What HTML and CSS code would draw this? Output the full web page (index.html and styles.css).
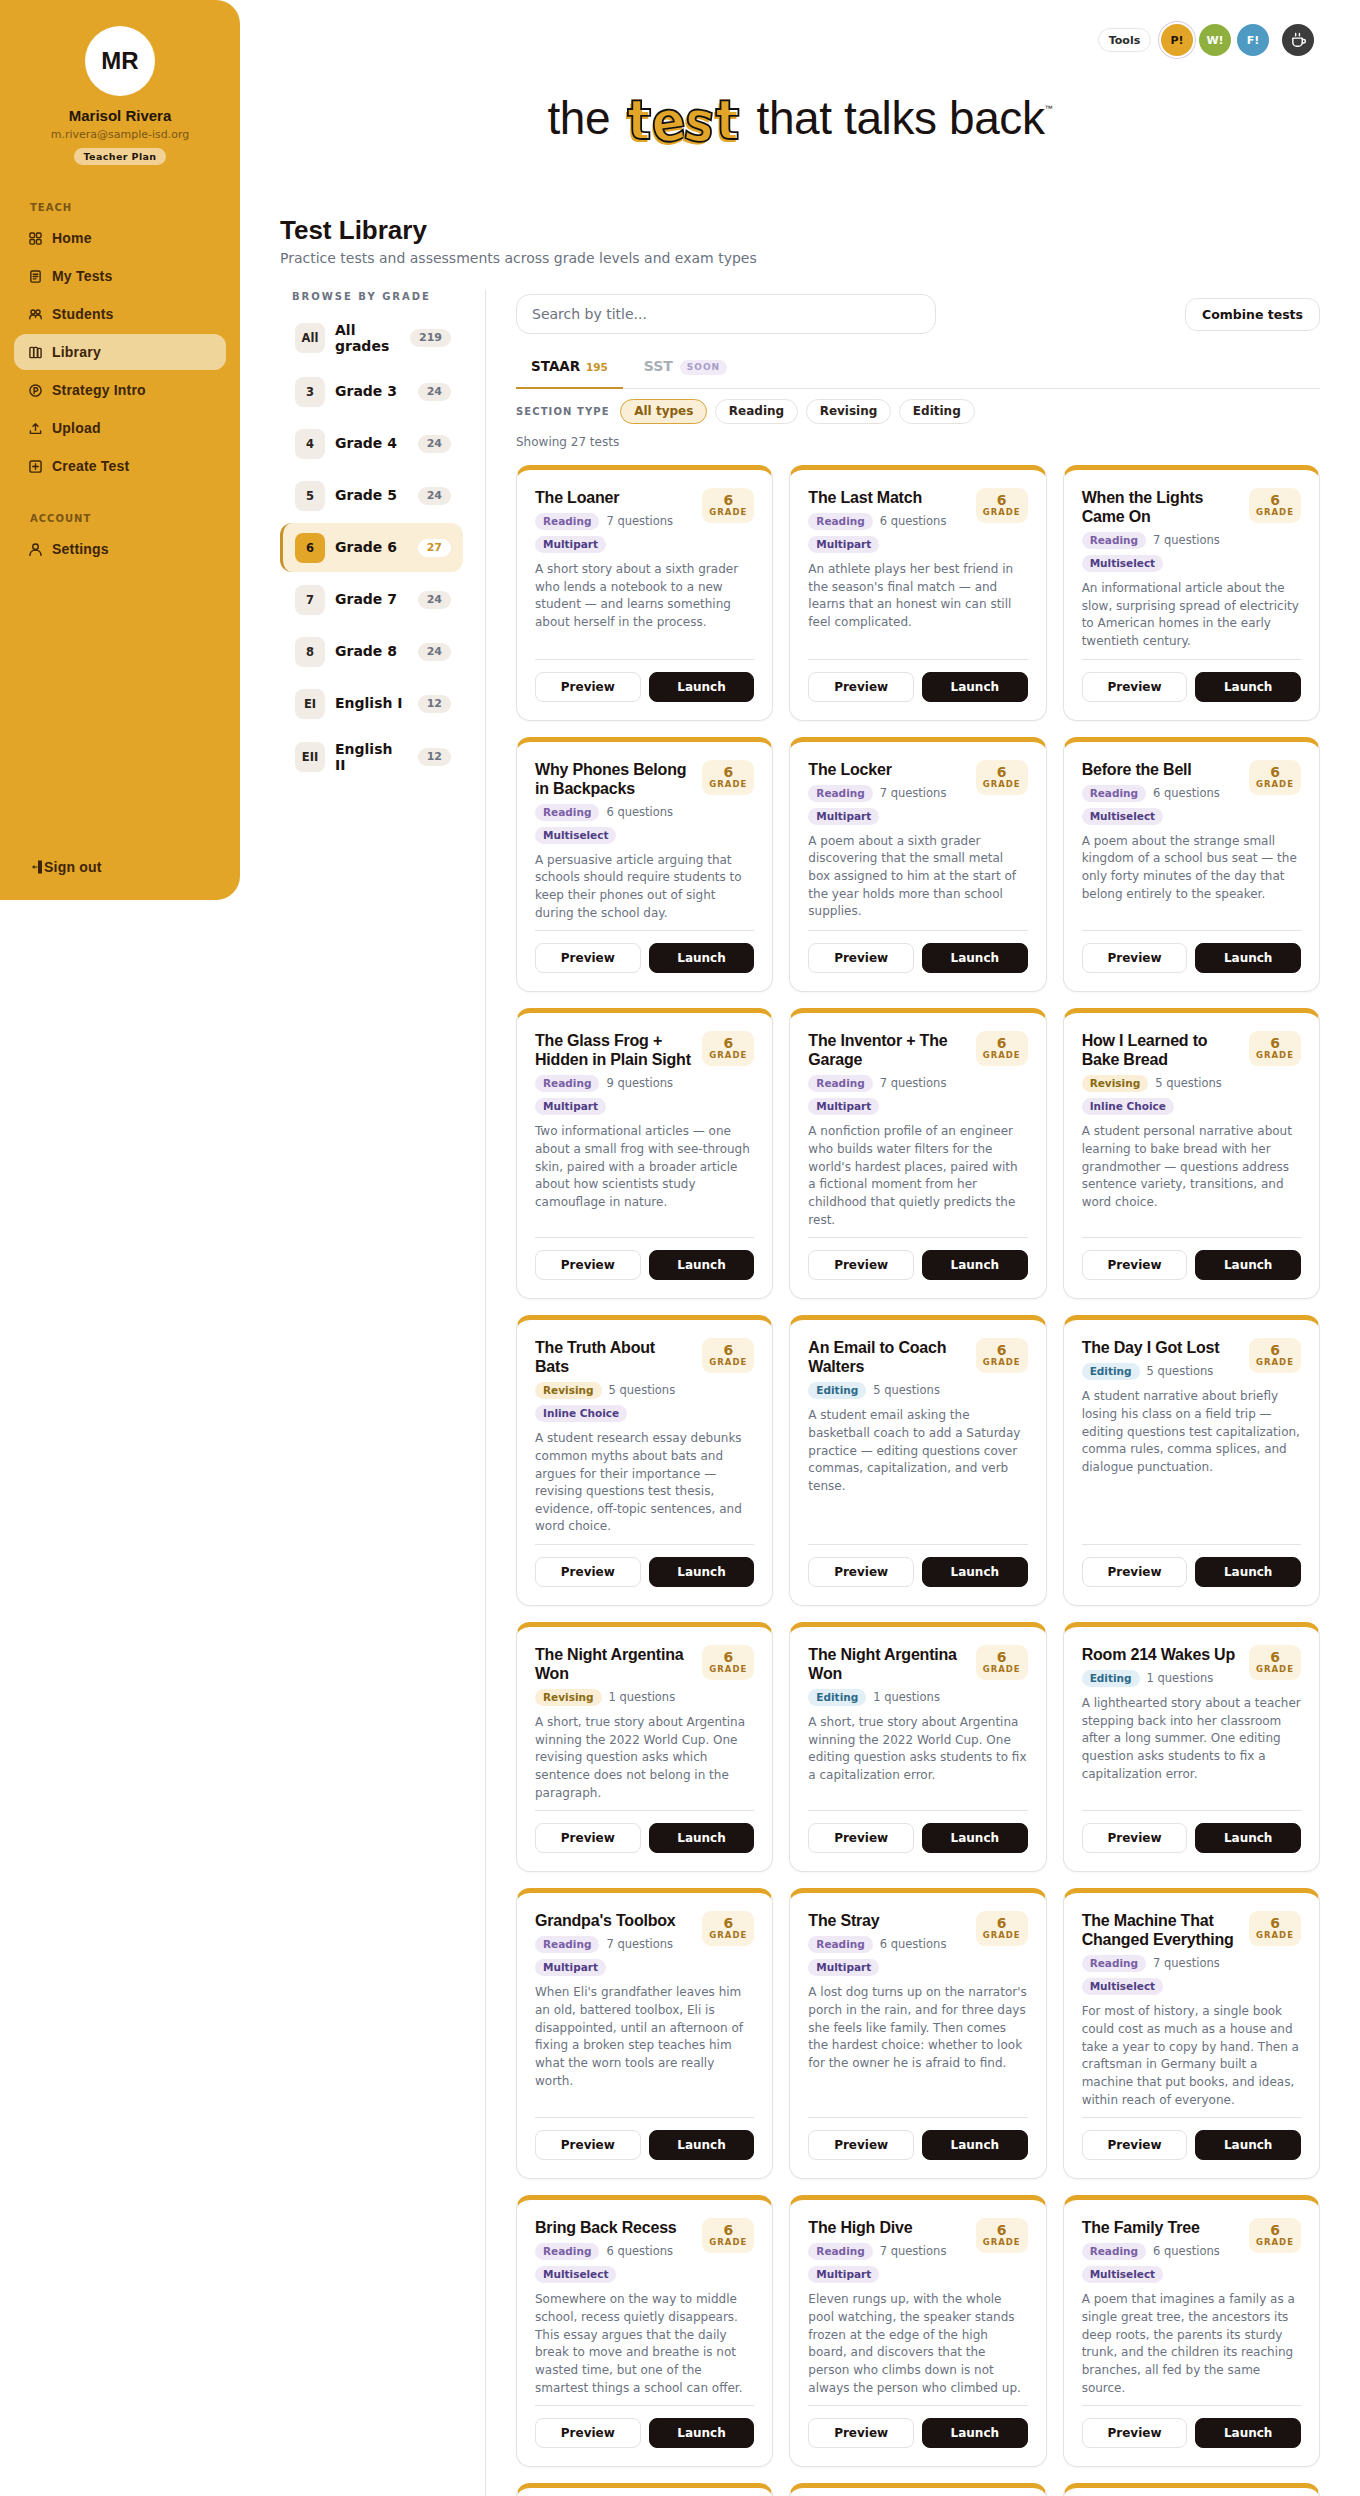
FILE: index.html
```html
<!DOCTYPE html>
<html lang="en">
<head>
<meta charset="utf-8">
<title>Test Library</title>
<link rel="stylesheet" href="styles.css">
</head>
<body>
<div class="app">
  <aside class="sidebar">
    <div class="profile">
      <div class="avatar">MR</div>
      <div class="user-name">Marisol Rivera</div>
      <div class="user-email">m.rivera@sample-isd.org</div>
      <div class="plan">Teacher Plan</div>
    </div>
    <div class="nav-label">TEACH</div>
    <nav class="nav">
      <a class="nav-item"><svg class="nav-icon" viewBox="0 0 14 14"><rect x="1" y="1" width="5" height="5" rx="1.3"/><rect x="8" y="1" width="5" height="5" rx="1.3"/><rect x="1" y="8" width="5" height="5" rx="1.3"/><rect x="8" y="8" width="5" height="5" rx="1.3"/></svg>Home</a>
      <a class="nav-item"><svg class="nav-icon" viewBox="0 0 14 14"><rect x="2" y="1" width="10" height="12" rx="1.5"/><path d="M4.5 4.5h5M4.5 7h5M4.5 9.5h3"/></svg>My Tests</a>
      <a class="nav-item"><svg class="nav-icon" viewBox="0 0 14 14"><circle cx="4.3" cy="4.3" r="2.2"/><circle cx="9.7" cy="4.3" r="2.2"/><path d="M.8 11.5c0-2.6 1.5-4 3.5-4s3 1 2.7 2.5c-.3-1.500.7-2.500 2.700-2.500s3.500 1.400 3.500 4"/></svg>Students</a>
      <a class="nav-item active"><svg class="nav-icon" viewBox="0 0 14 14"><rect x="1" y="1.500" width="4" height="11" rx="1"/><rect x="5" y="1.500" width="4" height="11" rx="1"/><rect x="9.500" y="2.500" width="3.500" height="10" rx="1"/></svg>Library</a>
      <a class="nav-item"><svg class="nav-icon" viewBox="0 0 14 14"><circle cx="7" cy="7" r="6"/><path d="M5.500 10.200V4h2a1.900 1.900 0 0 1 0 3.800h-2"/></svg>Strategy Intro</a>
      <a class="nav-item"><svg class="nav-icon" viewBox="0 0 14 14"><path d="M7 9V2M4.300 4.500 7 1.800l2.700 2.700M1.500 9.500v2.800h11V9.500"/></svg>Upload</a>
      <a class="nav-item"><svg class="nav-icon" viewBox="0 0 14 14"><rect x="1" y="1" width="12" height="12" rx="2"/><path d="M7 4v6M4 7h6"/></svg>Create Test</a>
    </nav>
    <div class="nav-label account">ACCOUNT</div>
    <nav class="nav">
      <a class="nav-item"><svg class="nav-icon" viewBox="0 0 14 14"><circle cx="7" cy="4" r="3"/><path d="M1 13.500c0-3.500 2.500-6 6-6s6 2.500 6 6"/></svg>Settings</a>
    </nav>
    <a class="signout"><svg class="signout-icon" viewBox="0 0 10 14"><path class="signout-bar" d="M6 .5h4v13H6z"/><path class="signout-arrow" d="M2.500 5v4L0 7zM2.500 6.400h3v1.200h-3z"/></svg>Sign out</a>
  </aside>

  <main class="main">
    <div class="topbar">
      <button class="tools-btn">Tools</button>
      <div class="circles">
        <span class="circle c-p">P!</span>
        <span class="circle c-w">W!</span>
        <span class="circle c-f">F!</span>
      </div>
      <span class="circle c-coffee"><svg class="coffee" viewBox="0 0 18 18"><path d="M6 1.500v2.500M10 1.500v2.500"/><path d="M3 6.500h10v4.500a4 4 0 0 1-4 4H7a4 4 0 0 1-4-4z"/><path d="M13 8h1.500a1.800 1.800 0 0 1 0 3.600H13"/></svg></span>
    </div>

    <div class="hero">
      <span>the</span>
      <span class="logo"><span class="lt l1">t</span><span class="lt l2">e</span><span class="lt l3">s</span><span class="lt l4">t</span></span>
      <span>that talks back<sup class="tm">™</sup></span>
    </div>

    <h1 class="page-title">Test Library</h1>
    <p class="page-sub">Practice tests and assessments across grade levels and exam types</p>

    <div class="library">
      <aside class="grades">
        <div class="grades-label">BROWSE BY GRADE</div>
        <ul class="grade-list">
          <li class="grade"><span class="grade-key">All</span><span class="grade-name">All grades</span><span class="grade-count">219</span></li>
          <li class="grade"><span class="grade-key">3</span><span class="grade-name">Grade 3</span><span class="grade-count">24</span></li>
          <li class="grade"><span class="grade-key">4</span><span class="grade-name">Grade 4</span><span class="grade-count">24</span></li>
          <li class="grade"><span class="grade-key">5</span><span class="grade-name">Grade 5</span><span class="grade-count">24</span></li>
          <li class="grade active"><span class="grade-key">6</span><span class="grade-name">Grade 6</span><span class="grade-count">27</span></li>
          <li class="grade"><span class="grade-key">7</span><span class="grade-name">Grade 7</span><span class="grade-count">24</span></li>
          <li class="grade"><span class="grade-key">8</span><span class="grade-name">Grade 8</span><span class="grade-count">24</span></li>
          <li class="grade"><span class="grade-key">EI</span><span class="grade-name">English I</span><span class="grade-count">12</span></li>
          <li class="grade"><span class="grade-key">EII</span><span class="grade-name">English II</span><span class="grade-count">12</span></li>
        </ul>
      </aside>

      <section class="content">
        <div class="search-row">
          <div class="search">Search by title...</div>
          <button class="combine">Combine tests</button>
        </div>
        <div class="tabs">
          <div class="tab active">STAAR <span class="tab-count">195</span></div>
          <div class="tab muted">SST <span class="soon">SOON</span></div>
        </div>
        <div class="filters">
          <span class="filter-label">SECTION TYPE</span>
          <span class="chip active">All types</span>
          <span class="chip">Reading</span>
          <span class="chip">Revising</span>
          <span class="chip">Editing</span>
        </div>
        <div class="showing">Showing 27 tests</div>

        <div class="cards">
          <article class="card"><div class="card-head"><div class="card-info"><h3 class="card-title">The Loaner</h3><div class="tags"><span class="tag reading">Reading</span><span class="qs">7 questions</span><span class="tag kind">Multipart</span></div></div><div class="badge"><b>6</b><span>GRADE</span></div></div><p class="desc">A short story about a sixth grader who lends a notebook to a new student — and learns something about herself in the process.</p><div class="actions"><button class="btn">Preview</button><button class="btn dark">Launch</button></div></article>
          <article class="card"><div class="card-head"><div class="card-info"><h3 class="card-title">The Last Match</h3><div class="tags"><span class="tag reading">Reading</span><span class="qs">6 questions</span><span class="tag kind">Multipart</span></div></div><div class="badge"><b>6</b><span>GRADE</span></div></div><p class="desc">An athlete plays her best friend in the season's final match — and learns that an honest win can still feel complicated.</p><div class="actions"><button class="btn">Preview</button><button class="btn dark">Launch</button></div></article>
          <article class="card"><div class="card-head"><div class="card-info"><h3 class="card-title">When the Lights Came On</h3><div class="tags"><span class="tag reading">Reading</span><span class="qs">7 questions</span><span class="tag kind">Multiselect</span></div></div><div class="badge"><b>6</b><span>GRADE</span></div></div><p class="desc">An informational article about the slow, surprising spread of electricity to American homes in the early twentieth century.</p><div class="actions"><button class="btn">Preview</button><button class="btn dark">Launch</button></div></article>

          <article class="card"><div class="card-head"><div class="card-info"><h3 class="card-title">Why Phones Belong in Backpacks</h3><div class="tags"><span class="tag reading">Reading</span><span class="qs">6 questions</span><span class="tag kind">Multiselect</span></div></div><div class="badge"><b>6</b><span>GRADE</span></div></div><p class="desc">A persuasive article arguing that schools should require students to keep their phones out of sight during the school day.</p><div class="actions"><button class="btn">Preview</button><button class="btn dark">Launch</button></div></article>
          <article class="card"><div class="card-head"><div class="card-info"><h3 class="card-title">The Locker</h3><div class="tags"><span class="tag reading">Reading</span><span class="qs">7 questions</span><span class="tag kind">Multipart</span></div></div><div class="badge"><b>6</b><span>GRADE</span></div></div><p class="desc">A poem about a sixth grader discovering that the small metal box assigned to him at the start of the year holds more than school supplies.</p><div class="actions"><button class="btn">Preview</button><button class="btn dark">Launch</button></div></article>
          <article class="card"><div class="card-head"><div class="card-info"><h3 class="card-title">Before the Bell</h3><div class="tags"><span class="tag reading">Reading</span><span class="qs">6 questions</span><span class="tag kind">Multiselect</span></div></div><div class="badge"><b>6</b><span>GRADE</span></div></div><p class="desc">A poem about the strange small kingdom of a school bus seat — the only forty minutes of the day that belong entirely to the speaker.</p><div class="actions"><button class="btn">Preview</button><button class="btn dark">Launch</button></div></article>

          <article class="card"><div class="card-head"><div class="card-info"><h3 class="card-title">The Glass Frog + Hidden in Plain Sight</h3><div class="tags"><span class="tag reading">Reading</span><span class="qs">9 questions</span><span class="tag kind">Multipart</span></div></div><div class="badge"><b>6</b><span>GRADE</span></div></div><p class="desc">Two informational articles — one about a small frog with see-through skin, paired with a broader article about how scientists study camouflage in nature.</p><div class="actions"><button class="btn">Preview</button><button class="btn dark">Launch</button></div></article>
          <article class="card"><div class="card-head"><div class="card-info"><h3 class="card-title">The Inventor + The Garage</h3><div class="tags"><span class="tag reading">Reading</span><span class="qs">7 questions</span><span class="tag kind">Multipart</span></div></div><div class="badge"><b>6</b><span>GRADE</span></div></div><p class="desc">A nonfiction profile of an engineer who builds water filters for the world's hardest places, paired with a fictional moment from her childhood that quietly predicts the rest.</p><div class="actions"><button class="btn">Preview</button><button class="btn dark">Launch</button></div></article>
          <article class="card"><div class="card-head"><div class="card-info"><h3 class="card-title">How I Learned to Bake Bread</h3><div class="tags"><span class="tag revising">Revising</span><span class="qs">5 questions</span><span class="tag kind">Inline Choice</span></div></div><div class="badge"><b>6</b><span>GRADE</span></div></div><p class="desc">A student personal narrative about learning to bake bread with her grandmother — questions address sentence variety, transitions, and word choice.</p><div class="actions"><button class="btn">Preview</button><button class="btn dark">Launch</button></div></article>

          <article class="card"><div class="card-head"><div class="card-info"><h3 class="card-title">The Truth About Bats</h3><div class="tags"><span class="tag revising">Revising</span><span class="qs">5 questions</span><span class="tag kind">Inline Choice</span></div></div><div class="badge"><b>6</b><span>GRADE</span></div></div><p class="desc">A student research essay debunks common myths about bats and argues for their importance — revising questions test thesis, evidence, off-topic sentences, and word choice.</p><div class="actions"><button class="btn">Preview</button><button class="btn dark">Launch</button></div></article>
          <article class="card"><div class="card-head"><div class="card-info"><h3 class="card-title">An Email to Coach Walters</h3><div class="tags"><span class="tag editing">Editing</span><span class="qs">5 questions</span></div></div><div class="badge"><b>6</b><span>GRADE</span></div></div><p class="desc">A student email asking the basketball coach to add a Saturday practice — editing questions cover commas, capitalization, and verb tense.</p><div class="actions"><button class="btn">Preview</button><button class="btn dark">Launch</button></div></article>
          <article class="card"><div class="card-head"><div class="card-info"><h3 class="card-title">The Day I Got Lost</h3><div class="tags"><span class="tag editing">Editing</span><span class="qs">5 questions</span></div></div><div class="badge"><b>6</b><span>GRADE</span></div></div><p class="desc">A student narrative about briefly losing his class on a field trip — editing questions test capitalization, comma rules, comma splices, and dialogue punctuation.</p><div class="actions"><button class="btn">Preview</button><button class="btn dark">Launch</button></div></article>

          <article class="card"><div class="card-head"><div class="card-info"><h3 class="card-title">The Night Argentina Won</h3><div class="tags"><span class="tag revising">Revising</span><span class="qs">1 questions</span></div></div><div class="badge"><b>6</b><span>GRADE</span></div></div><p class="desc">A short, true story about Argentina winning the 2022 World Cup. One revising question asks which sentence does not belong in the paragraph.</p><div class="actions"><button class="btn">Preview</button><button class="btn dark">Launch</button></div></article>
          <article class="card"><div class="card-head"><div class="card-info"><h3 class="card-title">The Night Argentina Won</h3><div class="tags"><span class="tag editing">Editing</span><span class="qs">1 questions</span></div></div><div class="badge"><b>6</b><span>GRADE</span></div></div><p class="desc">A short, true story about Argentina winning the 2022 World Cup. One editing question asks students to fix a capitalization error.</p><div class="actions"><button class="btn">Preview</button><button class="btn dark">Launch</button></div></article>
          <article class="card"><div class="card-head"><div class="card-info"><h3 class="card-title">Room 214 Wakes Up</h3><div class="tags"><span class="tag editing">Editing</span><span class="qs">1 questions</span></div></div><div class="badge"><b>6</b><span>GRADE</span></div></div><p class="desc">A lighthearted story about a teacher stepping back into her classroom after a long summer. One editing question asks students to fix a capitalization error.</p><div class="actions"><button class="btn">Preview</button><button class="btn dark">Launch</button></div></article>

          <article class="card"><div class="card-head"><div class="card-info"><h3 class="card-title">Grandpa's Toolbox</h3><div class="tags"><span class="tag reading">Reading</span><span class="qs">7 questions</span><span class="tag kind">Multipart</span></div></div><div class="badge"><b>6</b><span>GRADE</span></div></div><p class="desc">When Eli's grandfather leaves him an old, battered toolbox, Eli is disappointed, until an afternoon of fixing a broken step teaches him what the worn tools are really worth.</p><div class="actions"><button class="btn">Preview</button><button class="btn dark">Launch</button></div></article>
          <article class="card"><div class="card-head"><div class="card-info"><h3 class="card-title">The Stray</h3><div class="tags"><span class="tag reading">Reading</span><span class="qs">6 questions</span><span class="tag kind">Multipart</span></div></div><div class="badge"><b>6</b><span>GRADE</span></div></div><p class="desc">A lost dog turns up on the narrator's porch in the rain, and for three days she feels like family. Then comes the hardest choice: whether to look for the owner he is afraid to find.</p><div class="actions"><button class="btn">Preview</button><button class="btn dark">Launch</button></div></article>
          <article class="card"><div class="card-head"><div class="card-info"><h3 class="card-title">The Machine That Changed Everything</h3><div class="tags"><span class="tag reading">Reading</span><span class="qs">7 questions</span><span class="tag kind">Multiselect</span></div></div><div class="badge"><b>6</b><span>GRADE</span></div></div><p class="desc">For most of history, a single book could cost as much as a house and take a year to copy by hand. Then a craftsman in Germany built a machine that put books, and ideas, within reach of everyone.</p><div class="actions"><button class="btn">Preview</button><button class="btn dark">Launch</button></div></article>

          <article class="card"><div class="card-head"><div class="card-info"><h3 class="card-title">Bring Back Recess</h3><div class="tags"><span class="tag reading">Reading</span><span class="qs">6 questions</span><span class="tag kind">Multiselect</span></div></div><div class="badge"><b>6</b><span>GRADE</span></div></div><p class="desc">Somewhere on the way to middle school, recess quietly disappears. This essay argues that the daily break to move and breathe is not wasted time, but one of the smartest things a school can offer.</p><div class="actions"><button class="btn">Preview</button><button class="btn dark">Launch</button></div></article>
          <article class="card"><div class="card-head"><div class="card-info"><h3 class="card-title">The High Dive</h3><div class="tags"><span class="tag reading">Reading</span><span class="qs">7 questions</span><span class="tag kind">Multipart</span></div></div><div class="badge"><b>6</b><span>GRADE</span></div></div><p class="desc">Eleven rungs up, with the whole pool watching, the speaker stands frozen at the edge of the high board, and discovers that the person who climbs down is not always the person who climbed up.</p><div class="actions"><button class="btn">Preview</button><button class="btn dark">Launch</button></div></article>
          <article class="card"><div class="card-head"><div class="card-info"><h3 class="card-title">The Family Tree</h3><div class="tags"><span class="tag reading">Reading</span><span class="qs">6 questions</span><span class="tag kind">Multiselect</span></div></div><div class="badge"><b>6</b><span>GRADE</span></div></div><p class="desc">A poem that imagines a family as a single great tree, the ancestors its deep roots, the parents its sturdy trunk, and the children its reaching branches, all fed by the same source.</p><div class="actions"><button class="btn">Preview</button><button class="btn dark">Launch</button></div></article>

          <article class="card stub"></article>
          <article class="card stub"></article>
          <article class="card stub"></article>
        </div>
      </section>
    </div>
  </main>
</div>
</body>
</html>
```

FILE: styles.css
```css
* { box-sizing: border-box; }
html, body { margin: 0; padding: 0; background: #fff; }
body { font-family: "DejaVu Sans", sans-serif; color: #1a1210; }
button { font-family: inherit; cursor: pointer; }
h1, h3, p, ul { margin: 0; padding: 0; }
ul { list-style: none; }

.app { display: flex; align-items: flex-start; height: 100vh; overflow: hidden; }

/* Sidebar */
.sidebar { flex: 0 0 240px; height: 900px; background: #e2a528; border-radius: 0 24px 24px 0; display: flex; flex-direction: column; padding: 26px 14px 0; position: relative; }
.profile { display: flex; flex-direction: column; align-items: center; }
.avatar { width: 70px; height: 70px; border-radius: 50%; background: #fff; display: flex; align-items: center; justify-content: center; font: 700 24px "Liberation Sans", sans-serif; color: #1a1210; }
.user-name { font: 700 15px/18px "Liberation Sans", sans-serif; margin-top: 11px; color: #1f1508; }
.user-email { font-size: 11px; line-height: 14px; margin-top: 3px; color: #7a5514; }
.plan { font-size: 9.500px; font-weight: 700; line-height: 13px; letter-spacing: .4px; padding: 2px 9px; margin-top: 6px; background: rgba(255,255,255,.5); border-radius: 9px; color: #1f1508; }
.nav-label { font-size: 10px; font-weight: 700; letter-spacing: 1px; color: #7a5514; line-height: 12px; margin: 37px 0 0 16px; }
.nav-label.account { margin-top: 29px; }
.nav { display: flex; flex-direction: column; gap: 2px; margin-top: 6px; }
.nav-item { display: flex; align-items: center; gap: 10px; height: 36px; padding: 0 15px; border-radius: 12px; font: 700 14px "Liberation Sans", sans-serif; letter-spacing: .2px; color: #3d2408; }
.nav-item.active { background: #f0d59a; }
.nav-icon { width: 13px; height: 13px; flex: none; fill: none; stroke: #3d2408; stroke-width: 1.500; stroke-linecap: round; stroke-linejoin: round; }
.signout { position: absolute; left: 32px; top: 858px; display: flex; align-items: center; gap: 2px; font: 700 14px/18px "Liberation Sans", sans-serif; letter-spacing: .2px; color: #3d2408; }
.signout-icon { width: 10px; height: 14px; }
.signout-bar, .signout-arrow { fill: #3d2408; }

/* Main */
.main { flex: 1; min-width: 0; padding: 24px 40px 0; }
.topbar { display: flex; justify-content: flex-end; align-items: center; height: 32px; padding-right: 6px; }
.tools-btn { height: 24px; width: 53px; padding: 0; background: #fff; border: 1px solid #e8e6e2; border-radius: 12px; font-size: 11px; font-weight: 700; color: #2b2b2b; }
.circles { display: flex; gap: 6px; margin-left: 10px; }
.circle { width: 32px; height: 32px; border-radius: 50%; display: flex; align-items: center; justify-content: center; font-size: 11px; font-weight: 700; color: #fff; }
.c-p { background: #e2a528; color: #1f1508; box-shadow: 0 0 0 2px #fff, 0 0 0 3px #d8cbe0; }
.c-w { background: #8fb03e; }
.c-f { background: #4f9ac2; }
.c-coffee { background: #3c3c3c; margin-left: 13px; }
.coffee { width: 17px; height: 17px; fill: none; stroke: #fff; stroke-width: 1.500; stroke-linecap: round; stroke-linejoin: round; }

.hero { display: flex; justify-content: center; align-items: center; gap: 17px; height: 48px; margin-top: 38px; font: 400 46px/48px "Liberation Sans", sans-serif; color: #1a1210; letter-spacing: -.4px; }
.tm { font-size: 8px; vertical-align: 23px; line-height: 0; letter-spacing: 0; }
.logo { display: inline-flex; font: 700 56px/48px "DejaVu Sans Condensed", "DejaVu Sans", sans-serif; font-stretch: condensed; letter-spacing: 0; position: relative; top: 2px; }
.lt { -webkit-text-stroke: 1.800px #111; color: #e2a528; text-shadow: -2px 3px 0 #e2a528; margin-right: 0; }
.l1, .l4 { background: linear-gradient(90deg, #e2a528 0 62%, #fff 62%); -webkit-background-clip: text; background-clip: text; color: transparent; }
.l2 { transform: rotate(-8deg) translateY(2px); }
.l3 { transform: rotate(8deg) translateY(2px); }

.page-title { font: 700 26px/32px "Liberation Sans", sans-serif; margin-top: 72px; color: #1a1210; }
.page-sub { font-size: 14px; line-height: 18px; margin-top: 3px; color: #6b7280; }

.library { display: flex; gap: 30px; margin-top: 23px; }

/* Grade list */
.grades { flex: 0 0 206px; padding-right: 22px; border-right: 1px solid #e5e3df; min-height: 2300px; }
.grades-label { font-size: 10px; font-weight: 700; letter-spacing: 2px; line-height: 12px; color: #6b7280; padding: 1px 0 0 12px; margin-bottom: 9px; }
.grade-list { display: flex; flex-direction: column; gap: 3px; }
.grade { display: flex; align-items: center; padding: 9.500px 12px; border-left: 3px solid transparent; border-radius: 12px; }
.grade.active { background: #faefd6; border-left-color: #c8922a; }
.grade-key { flex: none; width: 30px; height: 30px; border-radius: 8px; background: #f1ece5; display: flex; align-items: center; justify-content: center; font-size: 11.500px; font-weight: 700; color: #2b2320; margin-right: 10px; }
.grade.active .grade-key { background: #e2a528; color: #1f1508; }
.grade-name { flex: 1; min-width: 0; font-size: 14px; font-weight: 700; line-height: 16.500px; color: #1a1210; }
.grade-count { flex: none; margin-left: 14px; height: 18px; padding: 0 9px; border-radius: 9px; background: #f1ece5; font-size: 11px; font-weight: 700; line-height: 18px; color: #6b7280; }
.grade.active .grade-count { background: #fff; color: #c8922a; }

/* Content */
.content { flex: 1; min-width: 0; padding-top: 4px; }
.search-row { display: flex; justify-content: space-between; align-items: center; height: 40px; }
.search { width: 420px; height: 40px; border: 1px solid #e5e3df; border-radius: 14px; padding: 0 15px; font-size: 14px; line-height: 38px; color: #6b7280; }
.combine { height: 33px; width: 135px; padding: 0; background: #fff; border: 1px solid #e5e3df; border-radius: 12px; font-size: 12.500px; font-weight: 700; color: #1a1210; }
.tabs { display: flex; margin-top: 14px; border-bottom: 1px solid #e5e3df; }
.tab { padding: 10px 15px 11px; font-size: 13.500px; line-height: 17px; font-weight: 700; border-bottom: 2px solid transparent; margin-bottom: -1px; }
.tab.active { border-bottom-color: #c8922a; }
.tab.muted { color: #a9adb5; font-size: 14px; margin-left: 6px; }
.tab-count { font-size: 10.500px; color: #c8922a; margin-left: 1px; }
.soon { display: inline-block; font-size: 9px; line-height: 15px; letter-spacing: 1px; color: #a99cc8; background: #f0ebf7; padding: 0 7px; border-radius: 8px; margin-left: 2px; vertical-align: 1px; }
.filters { display: flex; align-items: center; gap: 7.500px; margin-top: 10px; height: 25px; }
.filter-label { font-size: 10px; font-weight: 700; letter-spacing: 1.100px; color: #6b7280; margin-right: 3px; }
.chip { height: 25px; padding: 0 13px; border: 1px solid #e5e3df; border-radius: 13px; font-size: 12px; font-weight: 700; line-height: 23px; color: #2b2320; }
.chip.active { background: #faefd6; border-color: #d9a53a; color: #8a5f10; }
.showing { font-size: 12px; line-height: 15px; margin-top: 11px; color: #6b7280; }

/* Cards */
.cards { display: grid; grid-template-columns: repeat(3, 1fr); gap: 16px; margin-top: 15px; }
.card { display: flex; flex-direction: column; padding: 18px; background: #fff; border: 1px solid #e5e3df; border-top: 5px solid #e2a528; border-radius: 14px; box-shadow: 0 1px 2px rgba(0,0,0,.04); }
.card.stub { min-height: 120px; }
.card-head { display: flex; gap: 10px; align-items: flex-start; }
.card-info { flex: 1; min-width: 0; }
.card-title { font: 700 16px/19px "Liberation Sans", sans-serif; letter-spacing: -.2px; color: #1a1210; }
.tags { display: flex; flex-wrap: wrap; align-items: center; column-gap: 7px; row-gap: 6px; margin-top: 6px; }
.tag { height: 17px; padding: 0 8px; border-radius: 9px; font-size: 10.500px; font-weight: 700; line-height: 17px; }
.reading { background: #efe9f6; color: #7a5fa5; }
.kind { background: #efe9f6; color: #4f3d85; }
.revising { background: #faefd6; color: #8a6a10; }
.editing { background: #e2eff6; color: #2d6a8a; }
.qs { font-size: 11.500px; line-height: 17px; color: #6b7280; }
.badge { flex: none; width: 52px; height: 35px; border-radius: 9px; background: #fbf3e0; display: flex; flex-direction: column; align-items: center; justify-content: center; color: #a8741a; }
.badge b { font-size: 14px; line-height: 13px; }
.badge span { font-size: 8.500px; line-height: 10px; font-weight: 700; letter-spacing: 1px; }
.desc { font-size: 12px; line-height: 17.650px; margin: 8px 0; color: #6b7280; }
.actions { display: flex; gap: 8px; margin-top: auto; padding-top: 12px; border-top: 1px solid #e5e3df; }
.btn { flex: 1; height: 30px; padding: 0; background: #fff; border: 1px solid #e5e3df; border-radius: 8px; font-size: 12px; font-weight: 700; color: #1a1210; }
.btn.dark { background: #1a1210; border-color: #1a1210; color: #fff; }
```
